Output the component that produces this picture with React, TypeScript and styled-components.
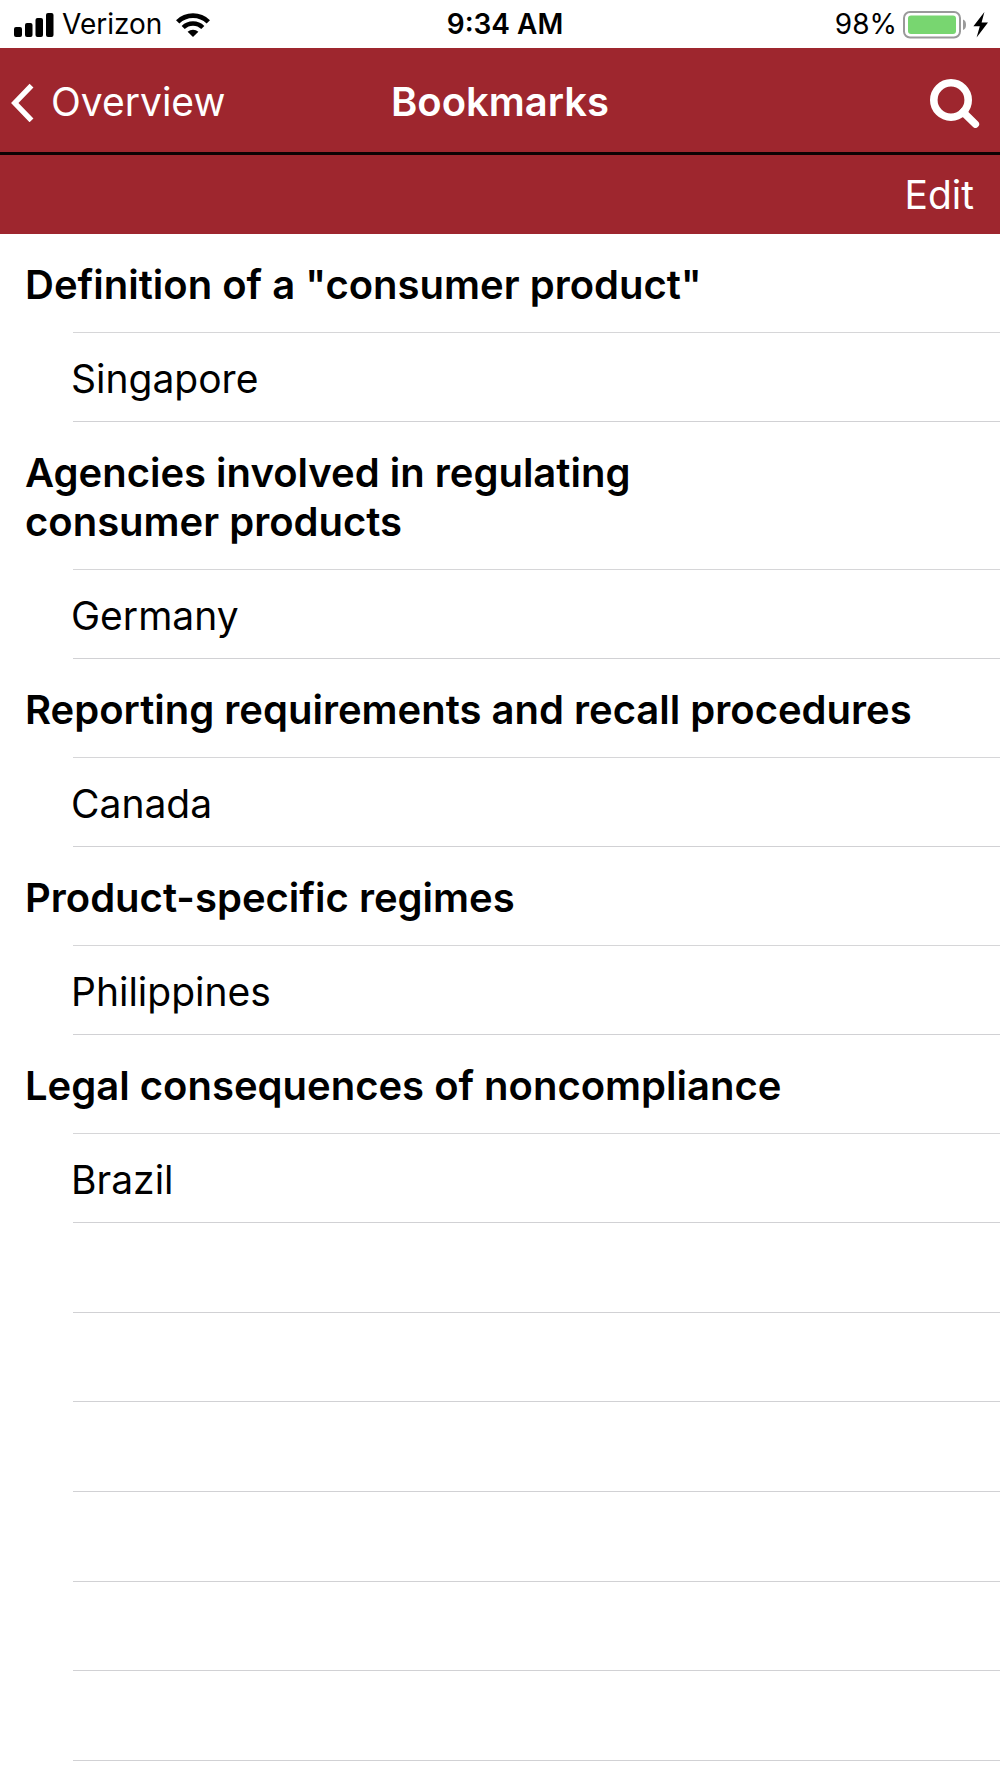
import React from "react";
import styled, { createGlobalStyle } from "styled-components";

const GlobalStyle = createGlobalStyle`
  *, *::before, *::after { box-sizing: border-box; }
  body {
    margin: 0;
    background: #fff;
    color: #000;
    font-family: Inter, "Liberation Sans", sans-serif;
    font-size: 39px;
  }
`;

const Screen = styled.div`
  display: flex;
  flex-direction: column;
  min-height: 100vh;
`;

const StatusBar = styled.div`
  display: grid;
  grid-template-columns: 1fr auto 1fr;
  align-items: center;
  height: 48px;
  padding: 1px 4px 0 14px;
  font-size: 28px;
  line-height: 47px;
`;

const StatusGroup = styled.div<{ $end?: boolean }>`
  display: flex;
  align-items: center;
  justify-content: ${(p) => (p.$end ? "flex-end" : "flex-start")};
  gap: ${(p) => (p.$end ? "6px" : "8px")};
  padding-right: ${(p) => (p.$end ? "7px" : "0")};
`;

const Carrier = styled.span`
  margin-right: 6px;
`;

const Clock = styled.time`
  font-weight: 600;
`;

const Icon = styled.svg`
  display: block;
  flex: none;
`;

const NavBar = styled.header`
  display: grid;
  grid-template-columns: 1fr auto 1fr;
  align-items: center;
  height: 107px;
  padding: 4px 10px 0;
  border-bottom: 3px solid #0c0203;
  background: #9e262e;
  color: #fff;
`;

const Title = styled.h1`
  margin: 0;
  font-size: 40px;
  font-weight: 600;
  line-height: 48px;
`;

const BarButton = styled.button<{ $end?: boolean }>`
  display: flex;
  align-items: center;
  justify-self: ${(p) => (p.$end ? "end" : "start")};
  gap: 15px;
  padding: ${(p) => (p.$end ? "0 10px 0 0" : "0")};
  border: 0;
  background: none;
  color: inherit;
  font: inherit;
  line-height: 48px;
  cursor: pointer;
`;

const ToolBar = styled.div`
  display: flex;
  align-items: center;
  justify-content: flex-end;
  height: 79px;
  padding: 1px 26px 0;
  background: #9e262e;
  color: #fff;
`;

const List = styled.main`
  display: flex;
  flex: 1;
  flex-direction: column;
  padding-bottom: 17px;
`;

const SectionTitle = styled.h2`
  max-width: 920px;
  margin: 0;
  padding: 26px 0 23px 25px;
  font-size: 40px;
  font-weight: 600;
  line-height: 49px;
`;

const Rows = styled.ul`
  margin: 0 0 0 73px;
  padding: 0;
  border-top: 1px solid #d6d6d8;
  list-style: none;
`;

const Row = styled.li`
  height: 89px;
  border-bottom: 1px solid #d1d1d4;
`;

const RowLink = styled.a`
  display: block;
  margin-left: -2px;
  padding-top: 4px;
  color: inherit;
  line-height: 84px;
  text-decoration: none;
`;

const EmptyRow = styled.div`
  flex: 1;
  min-height: 88px;
  margin-left: 73px;
  border-bottom: 1px solid #d1d1d4;
`;

const sections = [
  { title: 'Definition of a "consumer product"', countries: ["Singapore"] },
  { title: "Agencies involved in regulating consumer\u00a0products", countries: ["Germany"] },
  { title: "Reporting requirements and recall procedures", countries: ["Canada"] },
  { title: "Product-specific regimes", countries: ["Philippines"] },
  { title: "Legal consequences of noncompliance", countries: ["Brazil"] },
];

const emptyRows = [1, 2, 3, 4, 5, 6];

const SignalIcon = () => (
  <Icon width="40" height="24" viewBox="0 0 40 24" aria-hidden="true">
    <rect x="0" y="14" width="8" height="10" rx="2" />
    <rect x="11" y="10" width="7.5" height="14" rx="2" />
    <rect x="21.5" y="5" width="7.5" height="19" rx="2" />
    <rect x="32" y="0" width="7.5" height="24" rx="2" />
  </Icon>
);

const WifiIcon = () => (
  <Icon width="34" height="24" viewBox="0 0 34 24" aria-hidden="true">
    <g fill="none" stroke="#000" strokeWidth="4.8">
      <path d="M1.7 8.9 A22 22 0 0 1 32.3 8.9" />
      <path d="M7.2 14.5 A14 14 0 0 1 26.8 14.5" strokeWidth="4.4" />
    </g>
    <path d="M11.6 18.8 A8.2 8.2 0 0 1 22.4 18.8 L17 24 Z" />
  </Icon>
);

const BatteryIcon = () => (
  <Icon width="64" height="28" viewBox="0 0 64 28" aria-hidden="true">
    <rect x="1" y="1" width="56" height="25.5" rx="6" fill="none" stroke="#9a9a9a" strokeWidth="2" />
    <rect x="5" y="4.5" width="48" height="18.5" rx="3" fill="#78d670" />
    <path d="M60 8.5 Q63 9.5 63 13.7 Q63 18 60 19 Z" fill="#9a9a9a" />
  </Icon>
);

const BoltIcon = () => (
  <Icon width="16" height="26" viewBox="0 0 16 26" aria-hidden="true">
    <path d="M11.4 0 L0.4 14.2 L6.8 14.2 L3.6 25.4 L15 10.4 L8.6 10.4 Z" />
  </Icon>
);

const ChevronIcon = () => (
  <Icon width="26" height="40" viewBox="0 0 26 40" aria-hidden="true">
    <path d="M21.5 3.6 L4.8 21 L21.5 38.4" fill="none" stroke="#fff" strokeWidth="5.4" />
  </Icon>
);

const SearchIcon = () => (
  <Icon width="50" height="52" viewBox="0 0 50 52" aria-hidden="true">
    <g fill="none" stroke="#fff">
      <circle cx="21" cy="24" r="17.2" strokeWidth="7.6" />
      <path d="M33 36 L45.4 48.2" strokeWidth="7.4" strokeLinecap="round" />
    </g>
  </Icon>
);

export default function App() {
  return (
    <Screen>
      <GlobalStyle />
      <StatusBar>
        <StatusGroup>
          <SignalIcon />
          <Carrier>Verizon</Carrier>
          <WifiIcon />
        </StatusGroup>
        <Clock>9:34 AM</Clock>
        <StatusGroup $end>
          <span>98%</span>
          <BatteryIcon />
          <BoltIcon />
        </StatusGroup>
      </StatusBar>
      <NavBar>
        <BarButton type="button">
          <ChevronIcon />
          Overview
        </BarButton>
        <Title>Bookmarks</Title>
        <BarButton type="button" $end aria-label="Search">
          <SearchIcon />
        </BarButton>
      </NavBar>
      <ToolBar>
        <BarButton type="button">Edit</BarButton>
      </ToolBar>
      <List>
        {sections.map((section) => (
          <section key={section.title}>
            <SectionTitle>{section.title}</SectionTitle>
            <Rows>
              {section.countries.map((country) => (
                <Row key={country}>
                  <RowLink href="#">{country}</RowLink>
                </Row>
              ))}
            </Rows>
          </section>
        ))}
        {emptyRows.map((n) => (
          <EmptyRow key={n} />
        ))}
      </List>
    </Screen>
  );
}
